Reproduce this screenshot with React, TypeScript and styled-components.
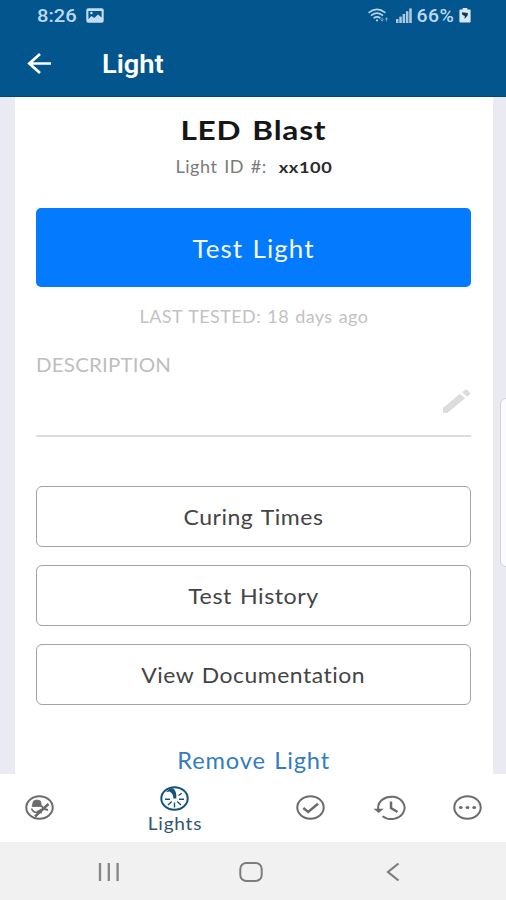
import React from "react";
import styled, { createGlobalStyle } from "styled-components";

const GlobalStyle = createGlobalStyle`
  * { box-sizing: border-box; }
  body { margin: 0; background: #ffffff; font-family: Lato, "Open Sans", sans-serif; }
  button { font: inherit; padding: 0; cursor: pointer; }
`;

const Screen = styled.div`
  width: 506px;
  height: 900px;
  display: flex;
  flex-direction: column;
  position: relative;
  overflow: hidden;
  background: #ffffff;
`;

const TopArea = styled.header`
  flex: none;
  height: 97px;
  background: #02568d;
  border-bottom: 1px solid #014580;
  color: #ffffff;
`;

const StatusBar = styled.div`
  height: 32px;
  display: flex;
  align-items: center;
  justify-content: space-between;
  padding: 0 35px 2px 37px;
  color: #bcd8f4;
`;

const StatusGroup = styled.div<{ $gap: number }>`
  display: flex;
  align-items: center;
  gap: ${(p) => p.$gap}px;
`;

const AppBar = styled.div`
  height: 64px;
  display: flex;
  align-items: center;
  padding-left: 27px;
  gap: 50px;
`;

const Label = styled.span<{
  $size: number;
  $stretch: number;
  $weight?: number;
  $color?: string;
  $origin?: string;
  $spacing?: number;
  $words?: number;
  $roboto?: boolean;
}>`
  display: inline-block;
  white-space: pre;
  padding-top: 2px;
  line-height: 1.2;
  font-family: ${(p) => (p.$roboto ? "Roboto, sans-serif" : "Lato, sans-serif")};
  font-size: ${(p) => p.$size}px;
  font-weight: ${(p) => p.$weight ?? 400};
  font-variant-ligatures: none;
  letter-spacing: ${(p) => p.$spacing ?? 0}px;
  word-spacing: ${(p) => p.$words ?? 0}px;
  color: ${(p) => p.$color ?? "inherit"};
  transform: scaleX(${(p) => p.$stretch});
  transform-origin: ${(p) => p.$origin ?? "center"};
`;

const Body = styled.main`
  flex: none;
  height: 677px;
  padding: 0 13px 0 15px;
  background: #e9eaf2;
`;

const Card = styled.section`
  height: 100%;
  padding: 16px 22px 0 21px;
  background: #ffffff;
  display: flex;
  flex-direction: column;
`;

const Line = styled.div<{ $height: number; $align?: string; $gap?: number }>`
  flex: none;
  height: ${(p) => p.$height}px;
  display: flex;
  align-items: center;
  justify-content: ${(p) => p.$align ?? "center"};
  gap: ${(p) => p.$gap ?? 0}px;
`;

const PrimaryButton = styled.button`
  flex: none;
  height: 79px;
  margin-top: 21px;
  border: 0;
  border-radius: 5px;
  background: #047aff;
  color: #f3f9ff;
`;

const Description = styled.div`
  flex: none;
  height: 56px;
  display: flex;
  justify-content: flex-end;
  align-items: flex-start;
  padding-top: 8px;
  border-bottom: 2px solid #dddddf;
`;

const Actions = styled.div`
  display: flex;
  flex-direction: column;
  gap: 18px;
  margin-top: 49px;
`;

const OutlineButton = styled.button`
  height: 61px;
  border: 1.5px solid #a3a3a3;
  border-radius: 6px;
  background: #ffffff;
  color: #444444;
`;

const RemoveLink = styled.button`
  margin-top: 40px;
  height: 28px;
  border: 0;
  background: transparent;
  color: #347dbd;
`;

const TabBar = styled.nav`
  flex: none;
  height: 68px;
  display: grid;
  grid-template-columns: 79px 191px 80px 78px 78px;
  background: #ffffff;
  color: #6b6b6b;
`;

const Tab = styled.div<{ $active?: boolean }>`
  display: flex;
  flex-direction: column;
  align-items: center;
  padding-top: ${(p) => (p.$active ? 12 : 21)}px;
  color: ${(p) => (p.$active ? "#14527c" : "inherit")};
  svg { display: block; flex: none; }
`;

const SystemNav = styled.footer`
  flex: none;
  height: 58px;
  display: grid;
  grid-template-columns: 109px 1fr 109px;
  padding: 2px 59px 0 54px;
  background: #f1f1f1;
  align-items: center;
  justify-items: center;
  svg { display: block; }
`;

const EdgeHandle = styled.div`
  position: absolute;
  right: -8px;
  top: 398px;
  width: 14px;
  height: 169px;
  border: 1.5px solid #d0d1dc;
  border-radius: 6px;
  background: #fbfbfe;
`;

const PictureIcon = () => (
  <svg width="18" height="15" viewBox="0 0 18 15">
    <rect x="0.3" y="0.3" width="17.4" height="14.4" rx="2" fill="#c5dcf4" />
    <path d="M2.4 3h13.2v6.4l-3.6-3-3.8 3.6-2.6-2-3.2 3z" fill="#02568d" />
    <circle cx="5.4" cy="5" r="1.3" fill="#c5dcf4" />
  </svg>
);

const WifiIcon = () => (
  <svg width="22" height="15" viewBox="0 0 22 15" fill="none" stroke="#b9d3ec" strokeLinecap="round">
    <path d="M1.2 4.4Q9 -1.6 16.8 4.4" strokeWidth="1.7" />
    <path d="M3.6 7.2Q9 3 14.4 7.2" strokeWidth="1.7" />
    <path d="M6.2 9.8Q9 7.8 11.8 9.8" strokeWidth="1.7" />
    <path d="M9 12.2v.3" strokeWidth="2" />
    <path d="M14 9.8v3M12.8 11.6l1.2 1.3 1.2-1.3M18.5 13v-3M17.3 11.2l1.2-1.3 1.2 1.3" strokeWidth="0.9" opacity="0.65" />
  </svg>
);

const SignalIcon = () => (
  <svg width="16" height="15" viewBox="0 0 16 15" fill="#a9c7e2">
    <rect x="0" y="11" width="2.5" height="4" />
    <rect x="3.3" y="8.6" width="2.5" height="6.4" />
    <rect x="6.6" y="6" width="2.5" height="9" />
    <rect x="9.9" y="3.2" width="2.5" height="11.8" />
    <rect x="13.2" y="0.4" width="2.6" height="14.6" />
  </svg>
);

const BatteryIcon = () => (
  <svg width="12" height="15" viewBox="0 0 12 15">
    <path d="M3.7 0h4.6v1.6H10.6q1 0 1 1V13.6q0 1-1 1H1.4q-1 0-1-1V2.6q0-1 1-1H3.7z" fill="#d5e8f8" />
    <path d="M3 4.2L8.8 5L8.6 7.5L5.5 11L5.8 8L3.2 6.8z" fill="#15354f" />
  </svg>
);

const BackArrow = () => (
  <svg width="25" height="22" viewBox="0 0 25 22" fill="none" stroke="#ffffff" strokeWidth="2.7">
    <path d="M24 10.5H2.5M13 1L2.3 10.5L13 20" />
  </svg>
);

const PencilIcon = () => (
  <svg width="29" height="25" viewBox="0 0 29 25" fill="#dcdcdc">
    <path d="M1 19L17.8 4.8L23 9.3L6 23.5Q5.5 24 4.5 24H2Q1 24 1 23z" />
    <path d="M20 3.2L23 0.8Q24.2 0.2 25.2 1L28 3.7Q28.8 4.6 27.8 5.5L25 7.7z" />
  </svg>
);

const Ring = () => <ellipse cx="14.5" cy="12.5" rx="13.2" ry="11.2" />;

const CureIcon = () => (
  <svg width="29" height="25" viewBox="0 0 29 25" fill="none" stroke="currentColor" strokeWidth="2">
    <Ring />
    <path d="M8.5 6Q12 3.8 15.5 6L16.5 11.5H7z" fill="currentColor" strokeWidth="0.8" />
    <path d="M6.5 13.5Q8 17.5 12 17.5L16 14.5" strokeWidth="1.6" />
    <path d="M23.5 9L18.5 13.5L10 21.5" strokeWidth="2.5" />
    <path d="M16.5 11L19 14L23 15M12 16.5L17 17.5" strokeWidth="1.9" />
  </svg>
);

const LightsIcon = () => (
  <svg width="29" height="25" viewBox="0 0 29 25" fill="none" stroke="currentColor" strokeWidth="2">
    <Ring />
    <path d="M6 6Q9 2 13 2.2Q17 5 16.3 12.5H13.3Q13.5 7.5 9.5 5.5z" fill="currentColor" stroke="none" />
    <path d="M5 13.2H10M19 13.2H24M14.5 16.5V21.5M11.8 15.6L8 19M17.2 15.6L21 19M18.5 9.5L21.8 7.2" strokeWidth="1.4" />
  </svg>
);

const CheckIcon = () => (
  <svg width="29" height="25" viewBox="0 0 29 25" fill="none" stroke="currentColor" strokeWidth="2">
    <Ring />
    <path d="M7.3 13L12.2 17L22 8.8" strokeWidth="2.5" />
  </svg>
);

const HistoryIcon = () => (
  <svg width="33" height="25" viewBox="0 0 33 25" fill="none" stroke="currentColor" strokeWidth="2">
    <path d="M5.2 14A13.2 11.2 0 1 1 9.5 21.2" />
    <path d="M0.5 13.8H10.8L5.7 18z" fill="currentColor" stroke="none" />
    <path d="M18 6.5V13L24.5 17" strokeWidth="2.5" />
  </svg>
);

const MoreIcon = () => (
  <svg width="29" height="25" viewBox="0 0 29 25" fill="none" stroke="currentColor" strokeWidth="2">
    <Ring />
    <g fill="currentColor" stroke="none">
      <ellipse cx="7.8" cy="12.5" rx="1.9" ry="1.6" />
      <ellipse cx="14.5" cy="12.5" rx="1.9" ry="1.6" />
      <ellipse cx="21.2" cy="12.5" rx="1.9" ry="1.6" />
    </g>
  </svg>
);

const actions = [
  { text: "Curing Times", stretch: 1.07 },
  { text: "Test History", stretch: 1.08 },
  { text: "View Documentation", stretch: 1.065 },
];

export default function App() {
  return (
    <Screen>
      <GlobalStyle />
      <TopArea>
        <StatusBar>
          <StatusGroup $gap={14}>
            <Label $roboto $size={18} $weight={500} $stretch={1.12} $origin="left">8:26</Label>
            <PictureIcon />
          </StatusGroup>
          <StatusGroup $gap={6}>
            <WifiIcon />
            <SignalIcon />
            <Label $roboto $size={18} $weight={500} $stretch={1.08} $spacing={0.4}>66%</Label>
            <BatteryIcon />
          </StatusGroup>
        </StatusBar>
        <AppBar>
          <BackArrow />
          <Label $roboto $size={25} $weight={600} $stretch={1.09} $origin="left">Light</Label>
        </AppBar>
      </TopArea>
      <Body>
        <Card>
          <Line $height={32}>
            <Label $size={27} $weight={700} $stretch={1.17} $spacing={0.7} $words={2} $color="#161616">LED Blast</Label>
          </Line>
          <Line $height={42} $gap={17}>
            <Label $size={17} $stretch={1.06} $spacing={0.5} $words={1.5} $color="#7a7a7a">Light ID #:</Label>
            <Label $size={16} $weight={700} $stretch={1.14} $spacing={0.5} $color="#2b2b2b">xx100</Label>
          </Line>
          <PrimaryButton>
            <Label $size={24.5} $stretch={1.06} $spacing={1} $words={1.5}>Test Light</Label>
          </PrimaryButton>
          <Line $height={60}>
            <Label $size={16.5} $stretch={1.09} $spacing={0.4} $words={1} $color="#c2c2c2">LAST TESTED: 18 days ago</Label>
          </Line>
          <Line $height={34} $align="flex-start">
            <Label $size={19.5} $stretch={1.05} $spacing={0.2} $origin="left" $color="#bebebe">DESCRIPTION</Label>
          </Line>
          <Description>
            <PencilIcon />
          </Description>
          <Actions>
            {actions.map((a) => (
              <OutlineButton key={a.text}>
                <Label $size={21.5} $stretch={a.stretch} $spacing={0.5} $words={1.5}>{a.text}</Label>
              </OutlineButton>
            ))}
          </Actions>
          <RemoveLink>
            <Label $size={22.5} $stretch={1.05} $spacing={0.8} $words={1.5}>Remove Light</Label>
          </RemoveLink>
        </Card>
      </Body>
      <TabBar>
        <Tab><CureIcon /></Tab>
        <Tab $active>
          <LightsIcon />
          <Label $size={17.5} $stretch={1.09} $spacing={0.7} $color="#31566f">Lights</Label>
        </Tab>
        <Tab><CheckIcon /></Tab>
        <Tab><HistoryIcon /></Tab>
        <Tab><MoreIcon /></Tab>
      </TabBar>
      <SystemNav>
        <svg width="22" height="20" viewBox="0 0 22 20" stroke="#858585" strokeWidth="2.3">
          <path d="M2 1V19M10.8 1V19M19.6 1V19" />
        </svg>
        <svg width="24" height="20" viewBox="0 0 24 20" fill="none" stroke="#7d7d7d" strokeWidth="2">
          <rect x="1.3" y="1" width="21.4" height="18" rx="6" />
        </svg>
        <svg width="14" height="20" viewBox="0 0 14 20" fill="none" stroke="#7d7d7d" strokeWidth="2.2">
          <path d="M12.5 1.5L2 10L12.5 18.5" />
        </svg>
      </SystemNav>
      <EdgeHandle />
    </Screen>
  );
}
